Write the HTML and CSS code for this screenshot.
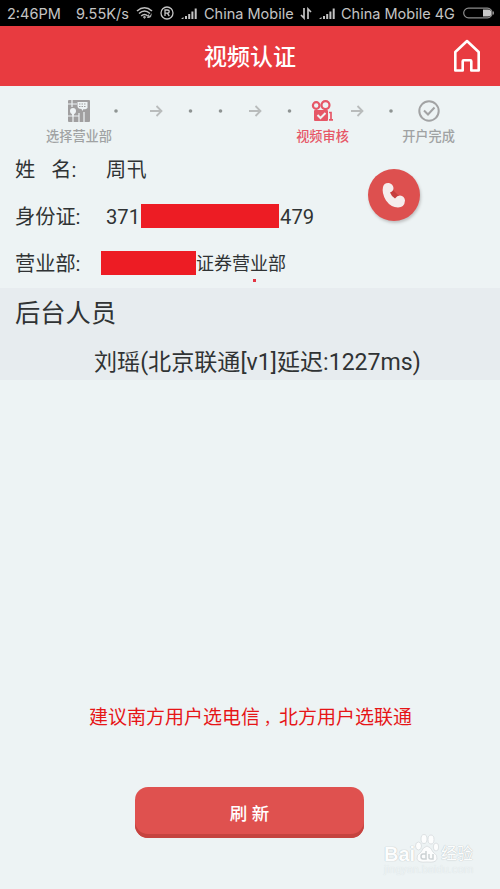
FILE: index.html
```html
<!DOCTYPE html>
<html lang="zh-CN">
<head>
<meta charset="utf-8">
<title>视频认证</title>
<link rel="stylesheet" href="styles.css">
</head>
<body>
<div class="status">
  <span class="time">2:46PM</span>
  <span class="speed">9.55K/s</span>
  <svg class="wifi" width="18" height="14" viewBox="0 0 18 14"><g fill="none" stroke="#bebebe" stroke-width="1.6"><path d="M1 5Q8.500-1.500 16 5M3 7.500Q8.500 2.500 14 7.500M5.200 10Q8.500 7 11.800 10"/></g><path d="M6.800 11L8.500 9.800 10.200 11 8.500 13zM11 12l1.500-4 1 2 2.500-3-1 4-2 1z" fill="#a8a8a8"/></svg>
  <svg class="reg" width="14" height="14" viewBox="0 0 14 14" fill="none" stroke="#c4c4c4" stroke-width="1.300"><circle cx="7" cy="7" r="6"/><path d="M5 10V4h2.200q2 0 2 1.600T7.200 7.200H5m2.300 0L9.300 10"/></svg>
  <svg class="signal" width="17" height="12" viewBox="0 0 17 12" fill="#c4c4c4"><path d="M0 12l2.500-2v2zM4 9h2v3H4zM7.200 7h2v5h-2zM10.400 4.500h2V12h-2zM13.700 1.500h2V12h-2z"/></svg>
  <span class="carrier">China Mobile</span>
  <svg class="updown" width="12" height="13" viewBox="0 0 12 13" fill="none" stroke="#c4c4c4" stroke-width="1.700"><path d="M4 1v10L1 8M8 12V2l3 3"/></svg>
  <svg class="signal2" width="17" height="12" viewBox="0 0 17 12" fill="#c4c4c4"><path d="M0 12l2.500-2v2zM4 9h2v3H4zM7.200 7h2v5h-2zM10.400 4.500h2V12h-2zM13.700 1.500h2V12h-2z"/></svg>
  <span class="carrier2">China Mobile 4G</span>
  <svg width="32" height="12" viewBox="0 0 32 12"><rect x=".7" y="1.200" width="28.500" height="9.600" rx="4.800" fill="none" stroke="#8c8c8c" stroke-width="1.200"/><path d="M20 2.500h5q3.500 0 3.500 3.500T25 9.500h-5z" fill="#c8c8c8"/><path d="M30.500 4.500v3" stroke="#8c8c8c"/></svg>
</div>
<header class="header">
  <h1 class="title">视频认证</h1>
  <svg class="home" width="28" height="34" viewBox="0 0 28 34" fill="none" stroke="#fff" stroke-width="2.600" stroke-linejoin="round"><path d="M2.300 13L14 2l11.700 11v18.500h-7.400v-9.200q0-1-1-1h-6.600q-1 0-1 1v9.200H2.300z"/></svg>
</header>
<nav class="steps">
  <div class="step branch">
    <svg width="22" height="22" viewBox="0 0 22 22"><rect width="22" height="22" rx="1" fill="#a09fa0"/><path d="M4 0v7M0 4h9M5 13v9M0 16h11M16 12v10M11 13v9" stroke="#eef3f5" stroke-width="1.200"/><circle cx="5" cy="11" r="3" fill="#eef3f5"/><path d="M5 17l-2-5h4zM9.500 2h10v6q-2 2-4 1l-1 2-1-2q-4 0-4-3z" fill="#eef3f5"/><path d="M11 4h7M11 6.500h7" stroke="#a09fa0" stroke-width="1.200" stroke-dasharray="1.500 1"/></svg>
    <span>选择营业部</span>
  </div>
  <svg width="184" height="22" viewBox="0 0 184 22"><g fill="#8f9493"><circle cx="4" cy="11" r="1.800"/><circle cx="78.500" cy="11" r="1.800"/><circle cx="108.500" cy="11" r="1.800"/><circle cx="177.500" cy="11" r="1.800"/></g><path d="M38 11h11M44.500 6l5 5-5 5M137 11h11M143.500 6l5 5-5 5" fill="none" stroke="#b9bcbc" stroke-width="1.800"/></svg>
  <div class="step audit">
    <svg width="24" height="22" viewBox="0 0 24 22"><g fill="none" stroke="#e65767" stroke-width="2.200"><circle cx="5.200" cy="5.500" r="3.300"/><circle cx="14.500" cy="5.100" r="4"/></g><rect x="3" y="10" width="14" height="11" rx="1" fill="#e65767"/><path d="M6.500 15l3 3 5-5" fill="none" stroke="#eef3f5" stroke-width="2"/><path d="M18 12.500h2v7M18 19.800h4" fill="none" stroke="#e65767" stroke-width="1.700"/></svg>
    <span>视频审核</span>
  </div>
  <svg width="53" height="22" viewBox="0 0 53 22"><path d="M2 11h11M8.500 6l5 5-5 5" fill="none" stroke="#b9bcbc" stroke-width="1.800"/><circle cx="42" cy="11" r="1.800" fill="#8f9493"/></svg>
  <div class="step done">
    <svg width="22" height="22" viewBox="0 0 22 22" fill="none" stroke="#a2a3a4" stroke-width="2"><circle cx="11" cy="11" r="9.700"/><path d="M6 10.500l4 4 6.500-7"/></svg>
    <span>开户完成</span>
  </div>
</nav>
<main>
  <section class="profile">
    <dl class="fields">
      <dt class="name">姓 <span>名:</span></dt><dd class="person">周卂</dd>
      <dt>身份证:</dt><dd><span class="prefix">371</span><i class="mask id"></i>479</dd>
      <dt>营业部:</dt><dd class="office"><i class="mask"></i>证券营业部</dd>
    </dl>
    <button class="call" aria-label="call"><svg width="26" height="28" viewBox="0 0 26 28"><path d="M12 9l8 8-6 3-6-8z" fill="#c63e3e"/><path d="M2 6Q3 1.500 8 2q4 1 4.500 5 0 3-3.500 4.500 1.500 4 5 6 2-3 5-3 4.500.5 5 5-.5 7-7 7-7 0-12-7Q.5 12 2 6z" fill="#f5eded"/></svg></button>
    <i class="mark"></i>
  </section>
  <section class="staff">
    <h2>后台人员</h2>
    <p><span>刘瑶(北京联通[v1]延迟:1227ms)</span></p>
  </section>
  <p class="tip">建议南方用户选电信<span>，</span>北方用户选联通</p>
  <button class="refresh">刷 新</button>
</main>
<div class="watermark">
  <div class="brand"><b>Bai</b><svg width="26" height="30" viewBox="0 0 24 30" fill="#fcfdfd" stroke="#d5dbdd" stroke-width=".8"><ellipse cx="3.500" cy="12" rx="3" ry="4"/><ellipse cx="9" cy="5" rx="3" ry="4.500"/><ellipse cx="16" cy="5.500" rx="3" ry="4.500"/><ellipse cx="21" cy="13" rx="2.700" ry="4"/><path d="M12 12q4 1 6 6 5 3 4 7-1 4-10 3-9 1-10-3-1-4 4-7 2-5 6-6z"/><path d="M11 17v8H8q-2 0-2-2.500T8 20h3M14 20v4q0 1 2 1h2v-5" fill="none" stroke="#ccd2d4" stroke-width="1.500"/></svg><span>经验</span></div>
  <div class="url">jingyan.baidu.com</div>
</div>
</body>
</html>
```
FILE: styles.css
```css
* { box-sizing: border-box; }
body { margin: 0; width: 500px; height: 889px; overflow: hidden; background: #edf3f4; color: #303334; font-family: Roboto, "Noto Sans CJK SC", sans-serif; }
svg { display: block; flex: none; }
button { border: 0; padding: 0; font: inherit; }
.status { display: flex; align-items: center; height: 26px; padding-left: 7px; background: #000; color: #c4c4c4; font: 14.5px Inter, sans-serif; white-space: nowrap; }
.status span { flex: none; }
.time { width: 69px; }
.speed { width: 60px; }
.wifi { margin-right: 6px; }
.reg { margin-right: 7px; }
.signal { margin-right: 6px; }
.carrier { width: 96px; }
.updown { margin-right: 7px; }
.signal2 { margin-right: 5px; }
.carrier2 { width: 122px; }
.header { display: grid; grid-template-columns: 1fr auto 1fr; align-items: center; height: 60px; background: #e83b40; color: #fff; }
.title { grid-column: 2; margin: 0; padding-top: 3px; font-size: 23px; line-height: 30px; font-weight: 500; }
.home { justify-self: end; margin-right: 19px; }
.steps { display: flex; height: 64px; padding: 14px 0 0 46px; font-size: 13.2px; color: #a0a2a3; }
.step { display: flex; flex-direction: column; align-items: center; white-space: nowrap; flex: none; }
.step span { margin-top: 5px; line-height: 20px; font-weight: 500; }
.branch { width: 66px; }
.audit { width: 53px; color: #e65767; }
.done { width: 53px; }
.profile { position: relative; display: flex; height: 138px; padding-left: 15px; }
.fields { display: grid; grid-template-columns: 86px 210px; grid-template-rows: 40px 53px 40px; align-items: center; width: 296px; margin: 0; font-size: 20.2px; line-height: 28px; white-space: nowrap; }
.fields dt, .fields dd { padding-top: 1px; }
.fields .name, .fields .person { padding: 0 0 1px; }
.fields .person { padding-left: 5px; }
.fields dd { display: flex; align-items: center; margin: 0; padding-left: 5px; }
.name span { margin-left: 11px; }
.prefix { width: 35px; }
.mask { display: block; flex: none; width: 95px; height: 24px; margin-top: -2px; background: #ed1c24; }
.mask.id { width: 138px; margin: -3px 1px 0; }
.fields .office { padding-left: 0; font-size: 18px; }
.call { display: grid; place-items: center; width: 52px; height: 52px; margin: 19px 0 0 57px; border-radius: 50%; background: #dd504f; box-shadow: 1px 2px 3px #bfc1c2; }
.mark { position: absolute; left: 253px; top: 129px; width: 3px; height: 3px; background: #e33442; }
.staff { height: 92px; background: #e7ecef; }
.staff h2 { margin: 0; padding: 7px 15px 0; font-size: 25.3px; line-height: 38px; font-weight: 400; }
.staff p { margin: 13px 0 0 94px; font-size: 23.1px; line-height: 34px; white-space: nowrap; }
.tip { margin: 323px 0 0 89px; height: 30px; color: #e61517; font-size: 19px; line-height: 30px; white-space: nowrap; }
.tip span { display: inline-block; width: 19px; padding-left: 4px; font-size: 15px; }
.refresh { display: block; width: 229px; height: 51px; margin: 54px 0 0 135px; padding-bottom: 1px; border-radius: 13px; background: #df514f; box-shadow: inset 0 -4px #c5433f; color: #fff; font-size: 17.5px; font-weight: 500; }
.watermark { margin: -4px 0 0 384px; width: 100px; color: #fcfdfd; text-shadow: 0 0 1px #b9c0c3, 0 0 1px #c5ccce; }
.brand { display: flex; align-items: flex-end; height: 30px; }
.brand b { width: 30px; font: bold 20px/20px "Liberation Sans", sans-serif; }
.brand span { font-size: 16px; line-height: 20px; margin-left: 1px; }
.url { font-size: 11px; line-height: 12px; color: #edf3f4; text-shadow: 0 0 1px #d5dbde; }
```
